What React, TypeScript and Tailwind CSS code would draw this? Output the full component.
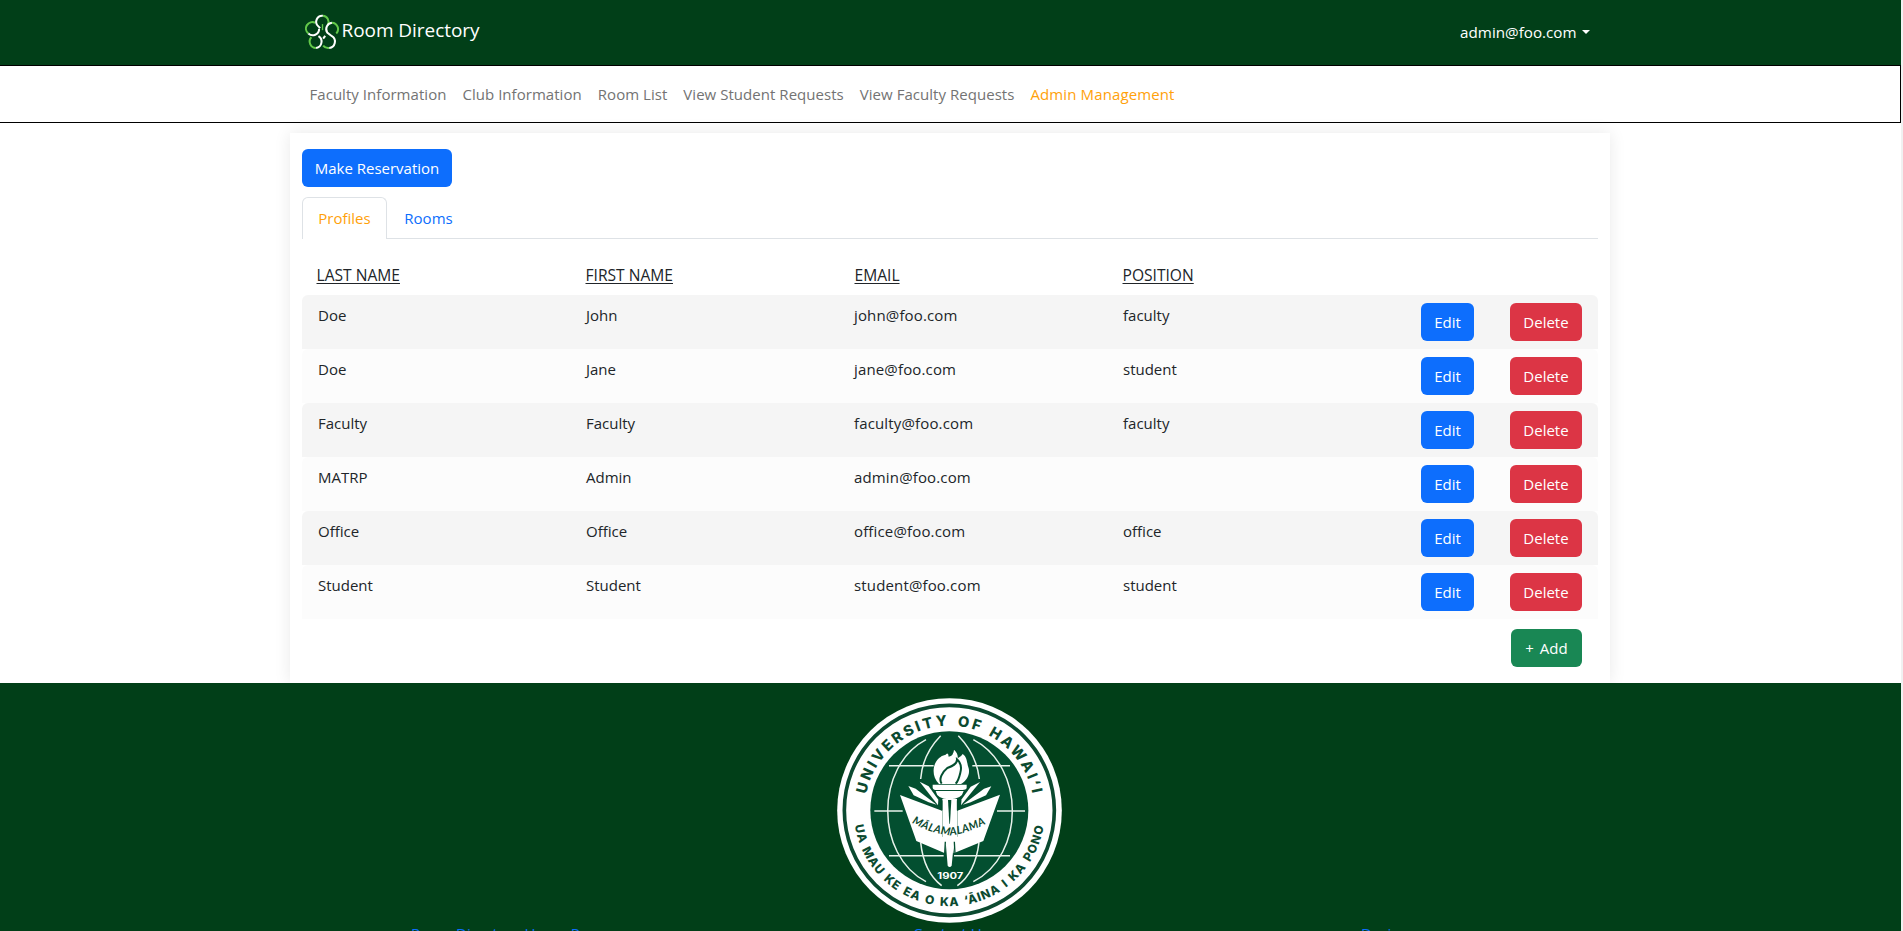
import React from 'react';

type Profile = { last: string; first: string; email: string; position: string };

const profiles: Profile[] = [
  { last: 'Doe', first: 'John', email: 'john@foo.com', position: 'faculty' },
  { last: 'Doe', first: 'Jane', email: 'jane@foo.com', position: 'student' },
  { last: 'Faculty', first: 'Faculty', email: 'faculty@foo.com', position: 'faculty' },
  { last: 'MATRP', first: 'Admin', email: 'admin@foo.com', position: '' },
  { last: 'Office', first: 'Office', email: 'office@foo.com', position: 'office' },
  { last: 'Student', first: 'Student', email: 'student@foo.com', position: 'student' },
];

const links = ['Faculty Information', 'Club Information', 'Room List', 'View Student Requests', 'View Faculty Requests'];

function FlowerLogo() {
  return (
    <svg viewBox="74 40 104 110" className="h-[37px] w-[35px]" fill="none" strokeWidth="6">
      <g stroke="#63c94a">
        <path d="M127 48 A18 18 0 0 1 142 74" />
        <path d="M104 69 A19 19 0 0 0 84 101" />
        <path d="M154 69 A19 19 0 0 1 167 101" />
        <path d="M93 112 A19 19 0 0 0 107 144" />
        <path d="M128 137 A19 19 0 0 0 146 144" />
        <path d="M126 73 V91" strokeWidth="4" />
      </g>
      <g stroke="#ffffff">
        <path d="M127 48 A18 18 0 0 0 113 79 L119 85" />
        <path d="M84 101 A19 19 0 0 0 116 87" />
        <path d="M154 69 A19 19 0 0 0 140 98 L154 109 A19 19 0 0 1 146 144" />
        <path d="M114 109 A19 19 0 0 1 107 144" />
        <path d="M128 116 L134 108" />
      </g>
    </svg>
  );
}

function Seal() {
  return (
    <svg viewBox="51 39 675 675" className="mr-[2px] h-[225px] w-[225px] shrink-0" fontFamily="Inter, 'Open Sans', sans-serif">
      <defs>
        <path id="seal-top" d="M138.7 327.5 A254 254 0 0 1 637.3 327.5" />
        <path id="seal-bottom" d="M104.5 421 A287 287 0 0 0 671.5 421" />
        <path id="seal-motto" d="M275 413 Q334 446 389 451 Q446 446 507 411" />
      </defs>
      <circle cx="388.500" cy="376.500" r="337" fill="#fff" />
      <circle cx="388" cy="376" r="315" fill="none" stroke="#0b4a30" strokeWidth="11" />
      <circle cx="388" cy="376" r="237" fill="#034f30" />
      <g fill="none" stroke="#e9f3ec" strokeWidth="4.500">
        <path d="M318 164 C165 245 165 510 318 590" />
        <path d="M460 164 C616 245 616 510 460 590" />
        <path d="M362 152 C325 190 306 230 302 282 M302 472 C308 530 330 575 365 602" />
        <path d="M415 152 C452 190 472 230 478 282 M477 472 C470 530 450 575 412 602" />
        <path d="M207 242 H341 M457 242 H570 M163 378 H248 M531 378 H615 M207 512 H371 M402 512 H570" />
      </g>
      <g fill="#fff">
        <path d="M240 330 L366 377 L366 455 L388 460 L412 455 L412 377 L540 329 L490 468 L401 505 L398 475 L377 475 L375 505 L289 468 Z" />
        <path d="M265 303 L287 311 L350 359 L326 352 L281 331 Z" />
        <path d="M299 290 L326 304 L355 344 L354 361 Z" />
        <path d="M514 304 L492 311 L428 359 L452 352 L498 331 Z" />
        <path d="M480 291 L452 305 L425 343 L423 361 Z" />
        <path d="M367 342 H411 V480 H367 Z M377 470 H402 L395 542 Q389 550 383 542 Z" />
        <path d="M338 299 H440 V310 Q438 315 428 315 H350 Q339 315 338 308 Z M347 318 H431 Q426 342 388 343 Q351 342 347 318 Z" />
        <path d="M357 297 C330 270 340 228 363 215 C366 211 374 213 379 207 Q385 202 386 215 Q401 212 402 194 Q415 206 413 220 Q424 215 428 207 C443 217 440 234 446 250 C451 269 439 288 423 297 Z" />
      </g>
      <path d="M365 296 C355 282 367 261 382 249 C398 243 412 237 411 223 C422 233 425 249 421 263 C417 280 415 288 407 296" fill="none" stroke="#034f30" strokeWidth="6" />
      <path d="M384 345 H394 L390 416 H388 Z" fill="#034f30" />
      <path d="M366 346 V376 M412 346 V376" stroke="#034f30" strokeWidth="3" />
      <path d="M376 470 L374 507 M403 470 L405 507" stroke="#034f30" strokeWidth="4" />
      <g fill="#0b4a30">
        <text fontSize="44" fontWeight="800" wordSpacing="4">
          <textPath href="#seal-top" textLength="698" lengthAdjust="spacing">UNIVERSITY OF HAWAI‘I</textPath>
        </text>
        <text fontSize="36" fontWeight="800" wordSpacing="5">
          <textPath href="#seal-bottom" textLength="808" lengthAdjust="spacing">UA MAU KE EA O KA ‘ĀINA I KA PONO</textPath>
        </text>
        <text fontSize="33" fontWeight="700" fontStyle="italic" fontFamily="Lato, sans-serif">
          <textPath href="#seal-motto" textLength="236" lengthAdjust="spacing">MĀLAMALAMA</textPath>
        </text>
      </g>
      <text x="352" y="582" fontSize="25" fontWeight="700" fill="#fff" textLength="78" lengthAdjust="spacingAndGlyphs">1907</text>
    </svg>
  );
}

export default function App() {
  return (
    <div className="flex h-[931px] w-full overflow-hidden bg-white font-['Open_Sans',sans-serif] text-[15px] leading-6 text-[#212529]">
      <div className="flex min-w-0 flex-1 flex-col">
        <header className="h-[65px] shrink-0 bg-[#013f18]">
          <div className="mx-auto flex h-full w-[1320px] justify-between pr-[21px] pl-[14px] text-white">
            <div className="flex pt-[13px]">
              <FlowerLogo />
              <span className="ml-[2px] text-[19px] leading-[34px] tracking-[-0.05px]">Room Directory</span>
            </div>
            <div className="flex items-center gap-[5px] pb-[2px] text-[15.2px]">
              <span>admin@foo.com</span>
              <svg viewBox="0 0 8 4" className="h-1 w-2" fill="white"><path d="M0 0H8L4 4Z" /></svg>
            </div>
          </div>
        </header>
        <nav className="h-[58px] shrink-0 border-y border-r border-black">
          <div className="mx-auto flex h-full w-[1320px] items-center gap-4 pl-[19.5px] tracking-[0.04px] text-[#737373]">
            {links.map((l) => <a key={l}>{l}</a>)}
            <a className="tracking-[0.12px] text-[#ffa10a]">Admin Management</a>
          </div>
        </nav>
        <main className="mt-[10px] ml-[290px] h-[550px] w-[1320px] shrink-0 px-3 pt-4 shadow-[0_0_16px_rgba(0,0,0,0.09)]">
          <button className="block h-[38px] w-[150px] rounded-md bg-[#0d6efd] text-white">Make Reservation</button>
          <div className="mt-[10px] flex h-[42px] border-b border-[#dee2e6]">
            <div className="h-[42px] w-[85px] rounded-t-md border border-b-0 border-[#dee2e6] bg-white pt-2 text-center text-[#ffa10a]">Profiles</div>
            <div className="w-[83px] pt-[9px] text-center text-[#0d6efd]">Rooms</div>
          </div>
          <div className="grid h-[56px] grid-cols-[269px_269px_268px_1fr] pt-6 pl-[14.5px] text-[15.6px] underline underline-offset-2">
            <span>LAST NAME</span>
            <span>FIRST NAME</span>
            <span>EMAIL</span>
            <span>POSITION</span>
          </div>
          {profiles.map((p, i) => (
            <div key={p.email} className={`grid h-[54px] grid-cols-[268px_268px_269px_298px_89px_72px] rounded-t-md pt-2 pl-4 ${i % 2 ? 'bg-[#fcfcfc]' : 'bg-[#f5f5f5]'}`}>
              <span>{p.last}</span>
              <span>{p.first}</span>
              <span className="tracking-[0.15px]">{p.email}</span>
              <span>{p.position}</span>
              <button className="h-[38px] w-[53px] rounded-md bg-[#0d6efd] text-white">Edit</button>
              <button className="h-[38px] w-[72px] rounded-md bg-[#dc3545] text-white">Delete</button>
            </div>
          ))}
          <div className="flex justify-end pt-[10px] pr-4">
            <button className="h-[38px] w-[71px] rounded-md bg-[#198754] text-white [word-spacing:2px]">+ Add</button>
          </div>
        </main>
        <footer className="flex h-[248px] shrink-0 flex-col items-center overflow-hidden bg-[#013f18] pt-[15px]">
          <Seal />
          <div className="grid w-full shrink-0 grid-cols-[411px_502px_448px_1fr] leading-[21px] text-[#0d6efd]">
            <span />
            <a>Room Directory Home Page</a>
            <a>Contact Us</a>
            <a>Design</a>
          </div>
        </footer>
      </div>
      <div className="w-[2px] shrink-0 bg-[#f1f1f1]" />
    </div>
  );
}
